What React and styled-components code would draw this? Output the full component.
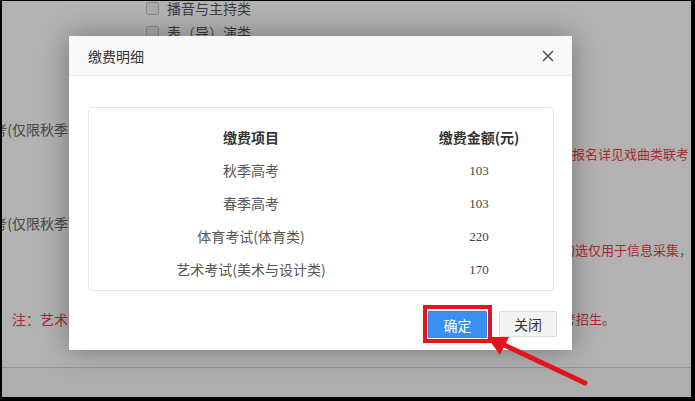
import React from 'react';
import styled, { createGlobalStyle } from 'styled-components';

const GlobalStyle = createGlobalStyle`
    html, body {
        margin: 0;
        padding: 0;
        background: #000;
    }
    body {
        font-family: "Noto Sans CJK SC", "Noto Sans", sans-serif;
    }
`;

const Frame = styled.div`
    position: relative;
    width: 695px;
    height: 401px;
    box-sizing: border-box;
    padding: 1px 4px 4px 2px;
    background: #000;
`;

const Page = styled.div`
    position: relative;
    height: 100%;
    background: #fff;
    overflow: hidden;
    display: flex;
    flex-direction: column;
`;

const CheckList = styled.ul`
    list-style: none;
    margin: -5px 0 27px 144px;
    padding: 0;
`;

const CheckItem = styled.li`
    display: flex;
    align-items: center;
    gap: 8px;
    height: 24px;
    font-size: 14px;
    color: #555;
`;

const Box = styled.span`
    width: 11px;
    height: 11px;
    border: 1px solid #c8c8c8;
    border-radius: 2px;
    background: #f4f4f4;
`;

const Rows = styled.div`
    display: flex;
    flex-direction: column;
    gap: 49px;
    margin-top: 48px;
`;

const Row = styled.div`
    display: flex;
    justify-content: space-between;
    height: ${props => props.$height}px;
`;

const LeftCell = styled.div`
    width: 80px;
    display: flex;
    justify-content: ${props => (props.$red ? 'flex-start' : 'flex-end')};
    align-items: flex-start;
    white-space: nowrap;
    overflow: hidden;
    font-size: 14px;
    line-height: 20px;
    color: ${props => (props.$red ? '#f03c46' : '#666')};
    padding-left: ${props => (props.$red ? 10 : 0)}px;
    box-sizing: border-box;
`;

const RightCell = styled.div`
    width: 131px;
    display: flex;
    align-items: flex-end;
    white-space: nowrap;
    overflow: hidden;
    font-size: 13px;
    line-height: 20px;
    color: #f03c46;
    padding-left: ${props => props.$indent}px;
    box-sizing: border-box;
`;

const PageFooter = styled.div`
    margin-top: auto;
    height: 29px;
    border-top: 1px solid #d2d2d2;
    background: #fafafa;
`;

const Overlay = styled.div`
    position: absolute;
    inset: 0;
    background: rgba(0, 0, 0, 0.3);
`;

const Dialog = styled.div`
    position: absolute;
    left: 67px;
    top: 35px;
    width: 503px;
    background: #fff;
    box-shadow: 0 0 26px rgba(0, 0, 0, 0.35);
    display: flex;
    flex-direction: column;
`;

const DialogHeader = styled.div`
    height: 40px;
    box-sizing: border-box;
    padding: 0 17px 0 19px;
    display: flex;
    align-items: center;
    justify-content: space-between;
    background: #f8f8f8;
    border-bottom: 1px solid #ececec;
`;

const Title = styled.span`
    font-size: 14px;
    color: #333;
`;

const CloseIcon = styled.svg`
    width: 14px;
    height: 14px;
    display: block;
`;

const DialogBody = styled.div`
    padding: 31px 18px 0 19px;
`;

const Card = styled.div`
    height: 184px;
    box-sizing: border-box;
    border: 1px solid #dfe7ee;
    border-radius: 4px;
    padding-top: 12px;
`;

const Table = styled.div`
    display: grid;
    grid-template-columns: 324px 132px;
    grid-auto-rows: 33px;
`;

const Cell = styled.div`
    display: flex;
    align-items: center;
    justify-content: center;
    padding-top: ${props => (props.$num ? 2 : 0)}px;
    font-size: ${props => (props.$num ? 13 : 14)}px;
    font-family: ${props => (props.$num ? '"Liberation Serif", serif' : '"Noto Sans CJK SC", sans-serif')};
    font-weight: ${props => (props.$head ? 700 : 400)};
    color: ${props => (props.$head ? '#333' : props.$num ? '#444' : '#555')};
`;

const DialogFooter = styled.div`
    height: 59px;
    box-sizing: border-box;
    padding: 14px 15px 7px 0;
    display: flex;
    justify-content: flex-end;
    align-items: center;
    gap: 7px;
`;

const Highlight = styled.div`
    border: 4px solid #e3141c;
    padding: 2px 1px 1px;
    display: flex;
`;

const Button = styled.button`
    width: ${props => (props.$primary ? 59 : 58)}px;
    height: ${props => (props.$primary ? 27 : 26)}px;
    border: 1px solid ${props => (props.$primary ? '#2f8ae6' : '#dcdcdc')};
    background: ${props => (props.$primary ? '#3a8ff0' : '#f3f3f3')};
    color: ${props => (props.$primary ? '#fff' : '#333')};
    font-family: "Noto Sans CJK SC", sans-serif;
    font-size: 14px;
    padding: 0;
    border-radius: 1px;
    cursor: pointer;
`;

const Annotation = styled.svg`
    position: absolute;
    left: 0;
    top: 0;
    width: 695px;
    height: 401px;
    pointer-events: none;
`;

const fees = [
    ['秋季高考', 103],
    ['春季高考', 103],
    ['体育考试(体育类)', 220],
    ['艺术考试(美术与设计类)', 170],
];

const App = () => {
    return (
        <>
            <GlobalStyle />
            <Frame>
                <Page>
                    <CheckList>
                        <CheckItem><Box />播音与主持类</CheckItem>
                        <CheckItem><Box />表（导）演类</CheckItem>
                    </CheckList>
                    <Rows>
                        <Row $height={45}>
                            <LeftCell>考(仅限秋季高</LeftCell>
                            <RightCell $indent={12}>报名详见戏曲类联考</RightCell>
                        </Row>
                        <Row $height={47}>
                            <LeftCell>考(仅限秋季高</LeftCell>
                            <RightCell $indent={2}>勾选仅用于信息采集，</RightCell>
                        </Row>
                        <Row $height={20}>
                            <LeftCell $red>注：艺术类</LeftCell>
                            <RightCell $indent={3}>考招生。</RightCell>
                        </Row>
                    </Rows>
                    <PageFooter />
                    <Overlay />
                    <Dialog>
                        <DialogHeader>
                            <Title>缴费明细</Title>
                            <CloseIcon viewBox="0 0 14 14">
                                <path d="M2 2 L12 12 M12 2 L2 12" stroke="#555" strokeWidth="1.6" />
                            </CloseIcon>
                        </DialogHeader>
                        <DialogBody>
                            <Card>
                                <Table>
                                    <Cell $head>缴费项目</Cell>
                                    <Cell $head>缴费金额(元)</Cell>
                                    {fees.map(([name, amount]) => (
                                        <React.Fragment key={name}>
                                            <Cell>{name}</Cell>
                                            <Cell $num>{amount}</Cell>
                                        </React.Fragment>
                                    ))}
                                </Table>
                            </Card>
                        </DialogBody>
                        <DialogFooter>
                            <Highlight>
                                <Button $primary>确定</Button>
                            </Highlight>
                            <Button>关闭</Button>
                        </DialogFooter>
                    </Dialog>
                </Page>
                <Annotation viewBox="0 0 695 401">
                    <line x1="585" y1="383" x2="500" y2="343" stroke="#e3141c" strokeWidth="5" strokeLinecap="round" />
                    <polygon points="487,337 509,337 500,355" fill="#e3141c" />
                </Annotation>
            </Frame>
        </>
    );
};

export default App;
